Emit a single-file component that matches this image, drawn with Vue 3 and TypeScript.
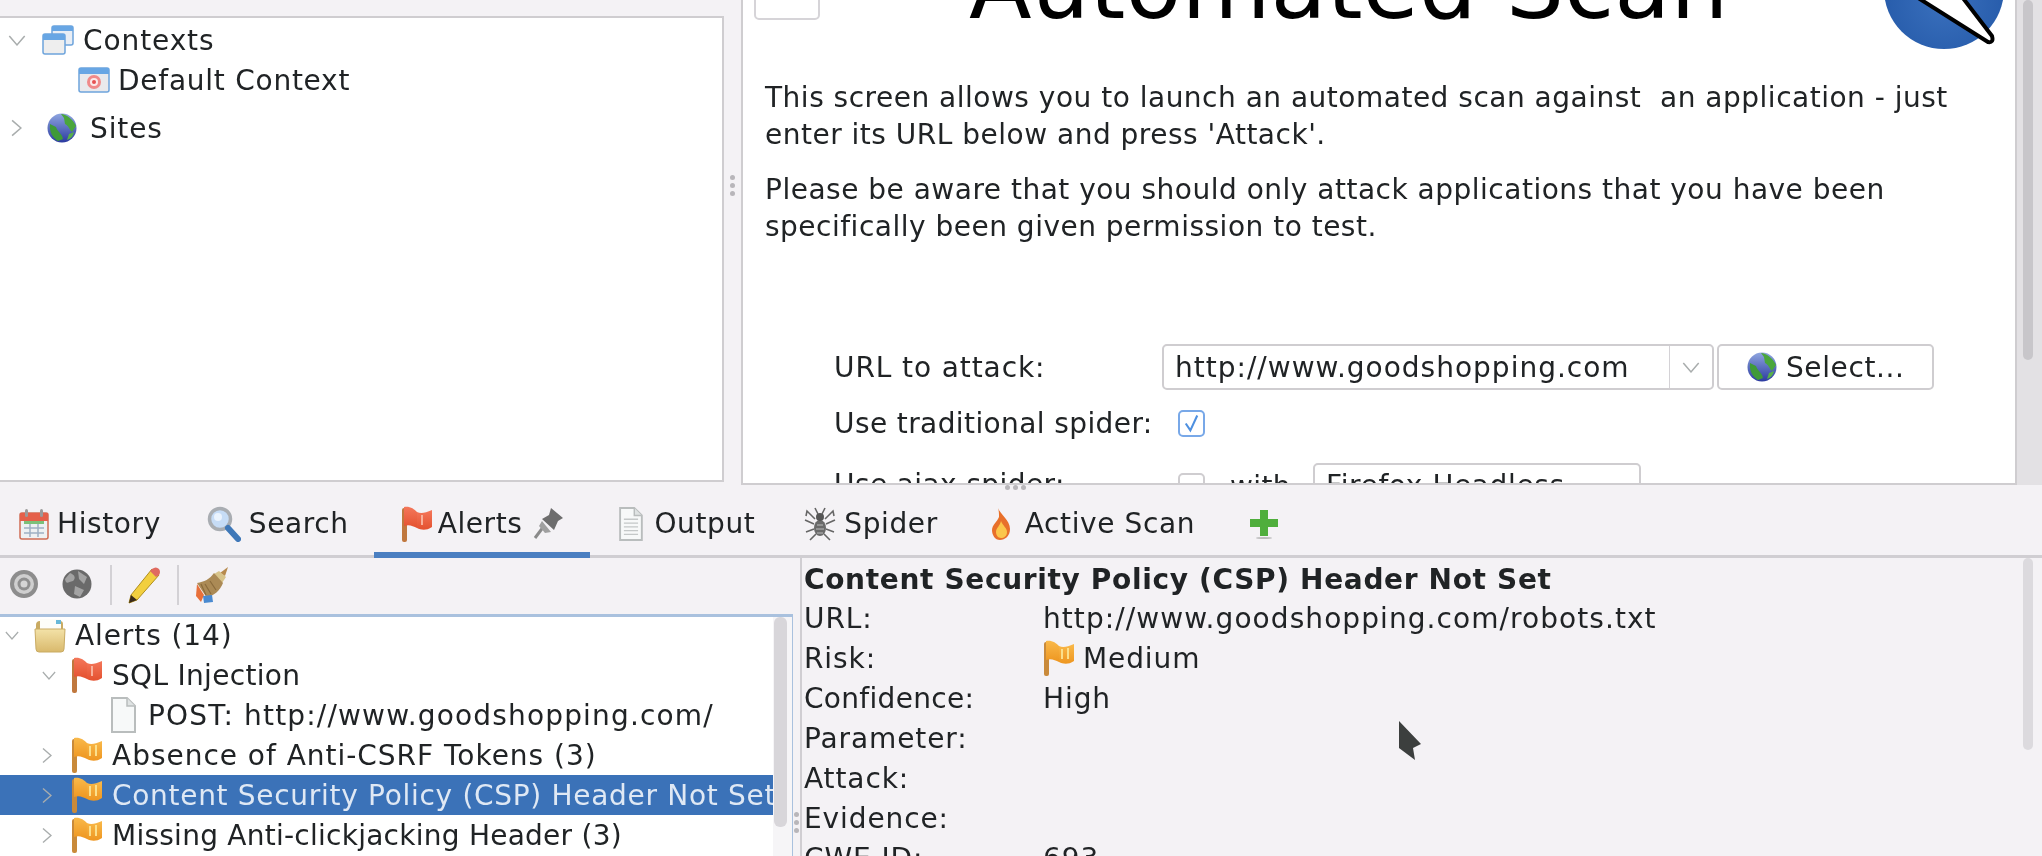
<script setup lang="ts">
interface Row { label: string; indent: number; chevron: '' | 'down' | 'right'; icon: string; spacing: number; selected?: boolean }
const rows: Row[] = [
  { label: 'Alerts (14)', indent: 0, chevron: 'down', icon: 'folder', spacing: 0.9 },
  { label: 'SQL Injection', indent: 37, chevron: 'down', icon: 'flag-red', spacing: 0.3 },
  { label: 'POST: http://www.goodshopping.com/', indent: 73, chevron: '', icon: 'doc', spacing: 1.17 },
  { label: 'Absence of Anti-CSRF Tokens (3)', indent: 37, chevron: 'right', icon: 'flag-orange', spacing: 0.98 },
  { label: 'Content Security Policy (CSP) Header Not Set', indent: 37, chevron: 'right', icon: 'flag-orange', spacing: 0.7, selected: true },
  { label: 'Missing Anti-clickjacking Header (3)', indent: 37, chevron: 'right', icon: 'flag-orange', spacing: 0.25 },
]
const details = ['Parameter:', 'Attack:', 'Evidence:']
const intro = "This screen allows you to launch an automated scan against  an application - just enter its URL below and press 'Attack'."
const warning = 'Please be aware that you should only attack applications that you have been specifically been given permission to test.'
</script>

<template>
  <div class="page">
    <svg class="defs" width="0" height="0" aria-hidden="true">
      <defs>
        <linearGradient id="gOrange" x1="0" y1="0" x2="0" y2="1"><stop offset="0" stop-color="#f9b94a" /><stop offset="1" stop-color="#ee9620" /></linearGradient>
        <linearGradient id="gRed" x1="0" y1="0" x2="0" y2="1"><stop offset="0" stop-color="#f4775a" /><stop offset="1" stop-color="#e4512f" /></linearGradient>
        <linearGradient id="gGlobe" x1="0" y1="0" x2="0" y2="1"><stop offset="0" stop-color="#8fa6e0" /><stop offset="1" stop-color="#2b3aa0" /></linearGradient>
        <linearGradient id="gFolder" x1="0" y1="0" x2="0" y2="1"><stop offset="0" stop-color="#f3e2a8" /><stop offset="1" stop-color="#d9b96c" /></linearGradient>
        <symbol id="flag-orange" viewBox="0 0 32 36">
          <rect x="1" y="2" width="5" height="34" rx="2" fill="#c98a3a" />
          <path d="M3 1 C9 0 13 3 16 6 L16 22 C12 20 8 18 3 20 Z" fill="url(#gOrange)" />
          <path d="M16 6 C20 8 24 7 31 4 L31 21 C25 25 20 24 16 22 Z" fill="url(#gOrange)" />
          <path d="M19 9 v10 M25 8 v11" stroke="#fbe08c" stroke-width="2" fill="none" />
        </symbol>
        <symbol id="flag-red" viewBox="0 0 32 36">
          <rect x="1" y="2" width="5" height="34" rx="2" fill="#c0783e" />
          <path d="M3 1 C9 0 13 3 16 6 L16 22 C12 20 8 18 3 20 Z" fill="url(#gRed)" />
          <path d="M16 6 C20 8 24 7 31 4 L31 21 C25 25 20 24 16 22 Z" fill="url(#gRed)" />
          <path d="M21 9 v10" stroke="#f8b09a" stroke-width="2" fill="none" />
        </symbol>
        <symbol id="doc" viewBox="0 0 26 36">
          <path d="M2 1 H17 L25 9 V35 H2 Z" fill="#f7f9f9" stroke="#b9bdbd" stroke-width="2" />
          <path d="M17 1 V9 H25" fill="#dfe3e3" stroke="#b9bdbd" stroke-width="1.5" />
        </symbol>
        <symbol id="doclines" viewBox="0 0 26 36">
          <path d="M2 1 H17 L25 9 V35 H2 Z" fill="#f7f9f9" stroke="#b9bdbd" stroke-width="2" />
          <path d="M17 1 V9 H25" fill="#dfe3e3" stroke="#b9bdbd" stroke-width="1.5" />
          <path d="M6 13 H21 M6 17 H21 M6 21 H21 M6 25 H21 M6 29 H21" stroke="#c4c8c8" stroke-width="1.4" />
        </symbol>
        <symbol id="folder" viewBox="0 0 32 36">
          <path d="M2 8 Q2 4 6 4 H26 Q29 4 29 7 V14 H2 Z" fill="#c9ab63" />
          <rect x="6" y="2" width="21" height="12" fill="#fdfdf8" />
          <path d="M22 3 h5 v4 h-5 Z" fill="#68b8d8" />
          <path d="M1 12 H31 L30 32 Q30 35 27 35 H5 Q2 35 2 32 Z" fill="url(#gFolder)" stroke="#c9ab63" stroke-width="1" />
        </symbol>
        <symbol id="globe" viewBox="0 0 30 30">
          <circle cx="15" cy="15" r="14.5" fill="url(#gGlobe)" />
          <path d="M14 1 C19 1 26 6 29 13 L25 19 C22 16 22 13 18 11 L17 5 Z" fill="#4aa63c" />
          <path d="M3 11 L9 14 C11 20 15 20 16 26 L11 28 C6 25 2 19 3 11 Z" fill="#3f9a38" />
          <path d="M22 21 L27 19 C26 24 23 26 20 27 Z" fill="#58b04a" />
        </symbol>
        <symbol id="ctx" viewBox="0 0 32 30">
          <rect x="10" y="1" width="21" height="19" rx="2" fill="#e9eef5" stroke="#6ea4dc" stroke-width="1.5" />
          <rect x="10" y="1" width="21" height="5" fill="#68a6e4" />
          <rect x="1" y="9" width="22" height="20" rx="2" fill="#eeeeee" stroke="#6ea4dc" stroke-width="1.5" />
          <rect x="1" y="9" width="22" height="6" fill="#68a6e4" />
        </symbol>
        <symbol id="ctxd" viewBox="0 0 32 26">
          <rect x="1" y="1" width="30" height="24" rx="2" fill="#e9e9ec" stroke="#6ea4dc" stroke-width="1.5" />
          <rect x="1" y="1" width="30" height="6" fill="#68a6e4" />
          <circle cx="16" cy="15" r="7" fill="#f08a8a" />
          <circle cx="16" cy="15" r="4" fill="#fbeaea" />
          <circle cx="16" cy="15" r="2" fill="#e65252" />
        </symbol>
      </defs>
    </svg>

    <section class="top">
      <div class="tree-wrap">
        <div class="sites-tree">
          <div class="s-row s1">
            <svg class="chev c-ctx" viewBox="0 0 16 10"><path d="M1 1 L8 9 L15 1" /></svg>
            <svg class="i-ctx"><use href="#ctx" /></svg>
            <span>Contexts</span>
          </div>
          <div class="s-row s2">
            <svg class="i-ctxd"><use href="#ctxd" /></svg>
            <span>Default Context</span>
          </div>
          <div class="s-row s3">
            <svg class="chev-r" viewBox="0 0 10 16"><path d="M1 1 L9 8 L1 15" /></svg>
            <svg class="i-globe"><use href="#globe" /></svg>
            <span>Sites</span>
          </div>
        </div>
      </div>
      <div class="split-v"><i /><i /><i /></div>
      <div class="scan">
        <div class="scan-body">
          <header class="scan-head">
            <div class="back-btn" />
            <h1>Automated Scan</h1>
            <svg class="logo" viewBox="0 0 120 120">
              <defs>
                <radialGradient id="gLogo" cx="0.5" cy="0.6" r="0.6"><stop offset="0" stop-color="#3a70bd" /><stop offset="1" stop-color="#2459a8" /></radialGradient>
              </defs>
              <circle cx="60" cy="60" r="60" fill="url(#gLogo)" />
              <path d="M20 60 L104 113 Q110 114 108 107 L72 60" fill="#fff" stroke="#000" stroke-width="4" stroke-linejoin="round" />
            </svg>
          </header>
          <p class="p1">{{ intro }}</p>
          <p class="p2">{{ warning }}</p>
          <div class="form">
            <div class="f-label">URL to attack:</div>
            <div class="f-ctl">
              <div class="combo">
                <span class="combo-text">http://www.goodshopping.com</span>
                <span class="combo-arrow"><svg class="chev small" viewBox="0 0 16 10"><path d="M1 1 L8 9 L15 1" /></svg></span>
              </div>
              <div class="select-btn"><svg class="i-sel"><use href="#globe" /></svg><span>Select...</span></div>
            </div>
            <div class="f-label narrow">Use traditional spider:</div>
            <div class="f-ctl tall"><div class="check on"><svg viewBox="0 0 20 20"><path d="M5 10 L9 16 L15 3" /></svg></div></div>
            <div class="f-label ajax narrow">Use ajax spider:</div>
            <div class="f-ctl ajax-ctl">
              <div class="check" /><span class="with">with</span>
              <div class="browser">Firefox Headless</div>
            </div>
          </div>
        </div>
        <div class="vscroll"><i /></div>
      </div>
    </section>

    <div class="split-h"><i /><i /><i /></div>

    <nav class="tabs">
      <div class="tab t-history">
        <svg class="ti" width="30" height="32" viewBox="0 0 30 32">
          <rect x="1" y="5" width="28" height="26" rx="2" fill="#eef1f3" stroke="#cf6d55" stroke-width="1.5" />
          <rect x="1" y="5" width="28" height="8" fill="#e5604a" />
          <rect x="5" y="13" width="20" height="3" fill="#7cc07a" />
          <path d="M5 20 H25 M5 25 H25 M11 16 V29 M19 16 V29" stroke="#9fb0c4" stroke-width="1.5" />
          <rect x="6" y="1" width="3" height="8" rx="1.5" fill="#9a9a9a" /><rect x="21" y="1" width="3" height="8" rx="1.5" fill="#9a9a9a" />
        </svg>
        <span>History</span>
      </div>
      <div class="tab t-search">
        <svg class="ti" width="34" height="36" viewBox="0 0 34 36">
          <circle cx="13" cy="13" r="10.5" fill="#c6dcf6" stroke="#a9adb2" stroke-width="3.5" />
          <circle cx="11" cy="11" r="4" fill="#eaf3fd" />
          <path d="M21 22 L31 33" stroke="#3f78b8" stroke-width="6" stroke-linecap="round" />
        </svg>
        <span>Search</span>
      </div>
      <div class="tab t-alerts">
        <svg class="ti" width="32" height="38"><use href="#flag-red" /></svg>
        <span>Alerts</span>
        <svg class="pin" width="32" height="36" viewBox="0 0 32 36">
          <path d="M18 2 L30 12 L25 15 L21 24 L9 13 L16 9 Z" fill="#6d6d6d" />
          <path d="M11 20 L2 32" stroke="#8a8a8a" stroke-width="3" />
          <path d="M9 15 L18 26 L12 27 L6 20 Z" fill="#a0a0a0" />
        </svg>
      </div>
      <div class="tab t-output">
        <svg class="ti" width="25" height="34"><use href="#doclines" /></svg>
        <span>Output</span>
      </div>
      <div class="tab t-spider">
        <svg class="ti" width="32" height="34" viewBox="0 0 32 34">
          <ellipse cx="16" cy="21" rx="6" ry="8" fill="#6a6a6a" /><circle cx="16" cy="10" r="4" fill="#555" />
          <path d="M13 18 H19 M12 22 H20 M13 26 H19" stroke="#bbb" stroke-width="1" />
          <path d="M11 12 L3 4 L2 9 M21 12 L29 4 L30 9 M10 17 L1 13 M22 17 L31 13 M10 22 L2 25 M22 22 L30 25 M12 27 L6 33 M20 27 L26 33 M14 7 L11 1 M18 7 L21 1" stroke="#666" stroke-width="1.6" fill="none" />
        </svg>
        <span>Spider</span>
      </div>
      <div class="tab t-scan">
        <svg class="ti" width="20" height="32" viewBox="0 0 20 32">
          <path d="M7 0 C9 6 19 12 19 21 C19 28 14 32 9 32 C4 32 1 27 1 22 C1 17 6 14 8 9 C8 6 8 3 7 0 Z" fill="#e8702a" />
          <path d="M10 13 C12 18 16 20 16 24 C16 28 13 30 10 30 C7 30 5 27 5 24 C5 20 9 18 10 13 Z" fill="#fbc64a" />
        </svg>
        <span>Active Scan</span>
      </div>
      <svg class="plus" width="28" height="30" viewBox="0 0 28 30">
        <path d="M10 1 H18 V10 H28 V18 H18 V27 H10 V18 H0 V10 H10 Z" fill="#4fae3c" />
        <ellipse cx="14" cy="29" rx="8" ry="1" fill="#bbb" />
      </svg>
    </nav>

    <section class="bottom">
      <div class="left">
        <div class="toolbar">
          <svg width="30" height="32" viewBox="0 0 30 32">
            <circle cx="15" cy="15" r="14" fill="#8d8d8d" /><circle cx="15" cy="15" r="10" fill="#cfcfcf" /><circle cx="15" cy="15" r="6.5" fill="#8f8f8f" /><circle cx="15" cy="15" r="3.5" fill="#d5d5d5" />
          </svg>
          <svg class="tb-globe" width="30" height="32" viewBox="0 0 30 32">
            <circle cx="15" cy="15" r="14.5" fill="#6a6a6a" /><path d="M8 4 C13 6 14 9 11 12 C6 13 4 16 3 10 Z M16 2 L25 8 L22 15 L17 10 Z M13 17 L22 21 L18 28 L12 25 Z" fill="#a3a3a3" />
          </svg>
          <i class="sep s-a" />
          <svg width="34" height="38" viewBox="0 0 34 38">
            <path d="M25 3 L32 9 L10 34 L2 37 L4 29 Z" fill="#f2cf3f" stroke="#b08f1e" stroke-width="1" />
            <path d="M25 3 Q29 0 32 3 Q34 6 32 9 L29 11 L23 5 Z" fill="#e06a60" />
            <path d="M4 29 L10 34 L2 37 Z" fill="#3a2a1a" />
          </svg>
          <i class="sep s-b" />
          <svg width="34" height="38" viewBox="0 0 34 38">
            <path d="M33 1 L30 10 L25 7 Z" fill="#b78a4d" />
            <path d="M31 11 L24 5 L19 8 L27 17 Z" fill="#d8c48a" />
            <path d="M19 7 L28 17 C25 25 19 29 12 32 L2 17 C9 16 15 13 19 7 Z" fill="#ab8a55" />
            <path d="M10 18 L16 28 M15 15 L21 24 M6 18 L11 29" stroke="#8a6b3c" stroke-width="1.2" />
            <path d="M2 18 L9 29 L6 36 L1 30 Z" fill="#e8703a" />
            <path d="M8 30 L17 29 L18 36 L9 37 Z" fill="#4a8ad0" />
          </svg>
        </div>
        <div class="alert-pane">
          <div class="tree">
            <div v-for="r in rows" :key="r.label" class="row" :class="{ sel: r.selected }" :style="{ paddingLeft: r.indent + 'px', letterSpacing: r.spacing + 'px' }">
              <span class="chev-slot">
                <svg v-if="r.chevron === 'down'" class="chev tree-chev" viewBox="0 0 16 10"><path d="M1 1 L8 9 L15 1" /></svg>
                <svg v-else-if="r.chevron === 'right'" class="chev-r tree-chev-r" viewBox="0 0 10 16"><path d="M1 1 L9 8 L1 15" /></svg>
              </span>
              <svg class="row-icon"><use :href="'#' + r.icon" /></svg>
              <span class="row-text">{{ r.label }}</span>
            </div>
          </div>
          <div class="tree-scroll"><i /></div>
        </div>
      </div>
      <div class="split-b"><i /><i /><i /></div>
      <div class="detail">
        <div class="d-title">Content Security Policy (CSP) Header Not Set</div>
        <div class="d-row"><span class="d-key">URL:</span><span class="d-url">http://www.goodshopping.com/robots.txt</span></div>
        <div class="d-row"><span class="d-key">Risk:</span><svg class="d-flag"><use href="#flag-orange" /></svg><span>Medium</span></div>
        <div class="d-row"><span class="d-key d-conf">Confidence:</span><span>High</span></div>
        <div v-for="d in details" :key="d" class="d-row"><span class="d-key">{{ d }}</span></div>
        <div class="d-row"><span class="d-key">CWE ID:</span><span>693</span></div>
        <div class="d-scroll"><i /></div>
        <svg class="cursor" width="24" height="42" viewBox="0 0 24 42"><path d="M1 1 L23 24 L15 28 L17 40 L9 34 L1 28 Z" fill="#3c3f3e" /></svg>
      </div>
    </section>
  </div>
</template>

<style>
html, body { margin: 0; background: #f4f2f5; overflow: hidden; }
</style>

<style scoped>
.page {
  width: 2042px; height: 856px; overflow: hidden; background: #f4f2f5; color: #202325;
  font-family: "DejaVu Sans", sans-serif; font-size: 28px; letter-spacing: 0.9px; display: flex; flex-direction: column;
  filter: blur(0.7px);
}
.defs { position: absolute; }
.top { height: 485px; flex: none; display: flex; }
.tree-wrap { width: 724px; flex: none; padding-top: 16px; padding-bottom: 3px; box-sizing: border-box; }
.sites-tree { height: 100%; background: #fff; border-top: 2px solid #cfcdd0; border-right: 2px solid #cfcdd0; border-bottom: 2px solid #cfcdd0; box-sizing: border-box; position: relative; }
.s-row { display: flex; align-items: center; white-space: nowrap; }
.s1 { height: 40px; margin-top: 2px; padding-left: 8px; }
.s2 { height: 40px; padding-left: 78px; letter-spacing: 0.75px; }
.s3 { height: 48px; margin-top: 4px; padding-left: 11px; }
.chev { width: 18px; height: 11px; fill: none; stroke: #a9adad; stroke-width: 1.4; flex: none; }
.chev-r { width: 11px; height: 18px; fill: none; stroke: #a9adad; stroke-width: 1.4; flex: none; }
.c-ctx { margin-right: 16px; }
.i-ctx { width: 32px; height: 30px; margin-right: 9px; }
.i-ctxd { width: 32px; height: 26px; margin-right: 8px; }
.s3 .chev-r { margin-right: 25px; }
.i-globe { width: 30px; height: 30px; margin-right: 13px; }
.split-v { width: 16px; flex: none; display: flex; flex-direction: column; align-items: center; justify-content: center; gap: 3px; height: 40px; margin-top: 165px; }
.split-v i, .split-h i, .split-b i { width: 5px; height: 5px; border-radius: 50%; background: #b8b6ba; display: block; }
.scan { flex: 1; display: flex; min-width: 0; }
.scan-body { flex: 1; min-width: 0; background: #fff; border-left: 2px solid #cfcdd0; border-right: 2px solid #cfcdd0; border-bottom: 2px solid #cfcdd0; padding-left: 22px; overflow: hidden; box-sizing: border-box; margin-left: 1px; }
.scan-head { height: 49px; display: flex; align-items: flex-end; overflow: hidden; margin-left: -11px; }
.back-btn { width: 66px; height: 40px; margin-bottom: 29px; background: #fff; border: 2px solid #d6d4d8; border-radius: 5px; box-sizing: border-box; flex: none; }
h1 { margin: 0 0 12px 149px; font-weight: 400; font-size: 91.5px; line-height: 100px; letter-spacing: 0; color: #000; white-space: nowrap; }
.logo { width: 120px; height: 120px; flex: none; margin-left: auto; margin-right: 11px; }
p { margin: 0; width: 1200px; line-height: 37px; white-space: pre-wrap; letter-spacing: 0.5px; }
.p1 { margin-top: 30px; }
.p2 { margin-top: 18px; }
.form { display: grid; grid-template-columns: 328px 1fr; margin: 98px 0 0 69px; align-items: center; white-space: nowrap; }
.narrow { letter-spacing: 0.4px; }
.f-ctl { display: flex; align-items: center; height: 48px; }
.f-ctl.tall { height: 65px; }
.combo { width: 552px; height: 46px; background: #fff; border: 2px solid #cfcdd0; border-radius: 5px; display: flex; align-items: center; box-sizing: border-box; }
.combo-text { flex: 1; padding-left: 11px; letter-spacing: 1px; }
.combo-arrow { width: 42px; height: 100%; border-left: 1px solid #d4d2d6; display: flex; align-items: center; justify-content: center; }
.select-btn { width: 217px; height: 46px; margin-left: 3px; background: #fff; border: 2px solid #cfcdd0; border-radius: 5px; display: flex; align-items: center; box-sizing: border-box; padding-left: 28px; letter-spacing: 0.6px; }
.i-sel { width: 30px; height: 30px; margin-right: 9px; }
.check { width: 27px; height: 27px; margin-left: 16px; box-sizing: border-box; border: 2px solid #cfcdd0; border-radius: 5px; background: #fff; flex: none; }
.check.on { border-color: #78a8e8; }
.check svg { display: block; width: 100%; height: 100%; fill: none; stroke: #4e90e0; stroke-width: 1.8; }
.ajax { padding-top: 2px; }
.ajax-ctl { padding-top: 6px; }
.with { margin-left: 25px; letter-spacing: 0.4px; }
.browser { margin-left: 22px; width: 328px; height: 46px; box-sizing: border-box; border: 2px solid #cfcdd0; border-radius: 5px; padding: 4px 11px; letter-spacing: 0.6px; }
.vscroll { width: 25px; flex: none; background: #e3e1e4; }
.vscroll i { display: block; width: 10px; height: 360px; margin-left: 6px; background: #c8c6ca; border-radius: 5px; }
.split-h { height: 0; display: flex; justify-content: center; gap: 3px; position: relative; margin-left: -12px; }
.tabs { height: 73px; flex: none; display: flex; align-items: center; position: relative; white-space: nowrap; box-sizing: border-box; border-bottom: 3px solid #d0ced2; padding-top: 7px; letter-spacing: 0.6px; }
.tab { display: flex; align-items: center; height: 100%; }
.ti { flex: none; margin-right: 8px; }
.t-history { padding-left: 19px; }
.t-search { margin-left: 46px; }
.t-alerts { margin-left: 52px; }
.t-alerts .ti { margin-right: 5px; }
.t-output { margin-left: 53px; }
.t-output .ti { margin-right: 11px; }
.t-spider { margin-left: 49px; }
.t-scan { margin-left: 53px; }
.t-scan .ti { margin-right: 14px; }
.pin { margin-left: 11px; }
.plus { margin-left: 55px; }
.t-alerts::after { content: ""; position: absolute; left: 374px; width: 216px; height: 6px; bottom: -3px; background: #4a7fc1; }
.bottom { flex: 1; display: flex; min-height: 0; }
.left { width: 793px; flex: none; display: flex; flex-direction: column; }
.toolbar { height: 59px; flex: none; display: flex; align-items: center; padding-left: 9px; padding-bottom: 2px; box-sizing: border-box; border-bottom: 3px solid #a9c1de; }
.tb-globe { margin-left: 23px; }
.sep { width: 2px; height: 40px; background: #d3d1d5; display: block; }
.s-a { margin: 0 15px 0 18px; }
.s-b { margin: 0 16px; }
.alert-pane { flex: 1; display: flex; background: #fff; min-height: 0; border-right: 1px solid #a9c1de; }
.tree { flex: 1; min-width: 0; margin-top: -2px; }
.row { height: 40px; display: flex; align-items: center; white-space: nowrap; overflow: hidden; box-sizing: border-box; }
.row.sel { background: #3b72b8; color: #dfe8f4; }
.chev-slot { width: 34px; flex: none; padding-left: 5px; box-sizing: border-box; display: flex; }
.tree-chev { width: 14px; height: 9px; }
.tree-chev-r { width: 10px; height: 17px; }
.row-icon { width: 32px; height: 36px; flex: none; margin-right: 9px; }
.tree-scroll { width: 19px; flex: none; background: #f6f5f7; }
.tree-scroll i { display: block; width: 13px; height: 210px; margin-left: 1px; background: #d8d6da; border-radius: 6px; }
.split-b { width: 7px; flex: none; display: flex; flex-direction: column; gap: 3px; padding-top: 254px; align-items: center; }
.detail { flex: 1; min-width: 0; position: relative; border-left: 2px solid #d0ced2; box-sizing: border-box; padding-left: 2px; }
.d-title { height: 40px; line-height: 44px; font-weight: 700; letter-spacing: 0.66px; }
.d-row { height: 40px; display: flex; align-items: center; white-space: nowrap; }
.d-key { width: 239px; flex: none; }
.d-url { letter-spacing: 1.07px; }
.d-conf { letter-spacing: 0.3px; }
.d-flag { width: 32px; height: 36px; flex: none; margin-right: 8px; }
.d-scroll { position: absolute; top: 0; right: 9px; width: 10px; height: 192px; }
.d-scroll i { display: block; width: 100%; height: 100%; background: #dcdade; border-radius: 5px; }
.cursor { position: absolute; left: 596px; top: 162px; }
</style>
